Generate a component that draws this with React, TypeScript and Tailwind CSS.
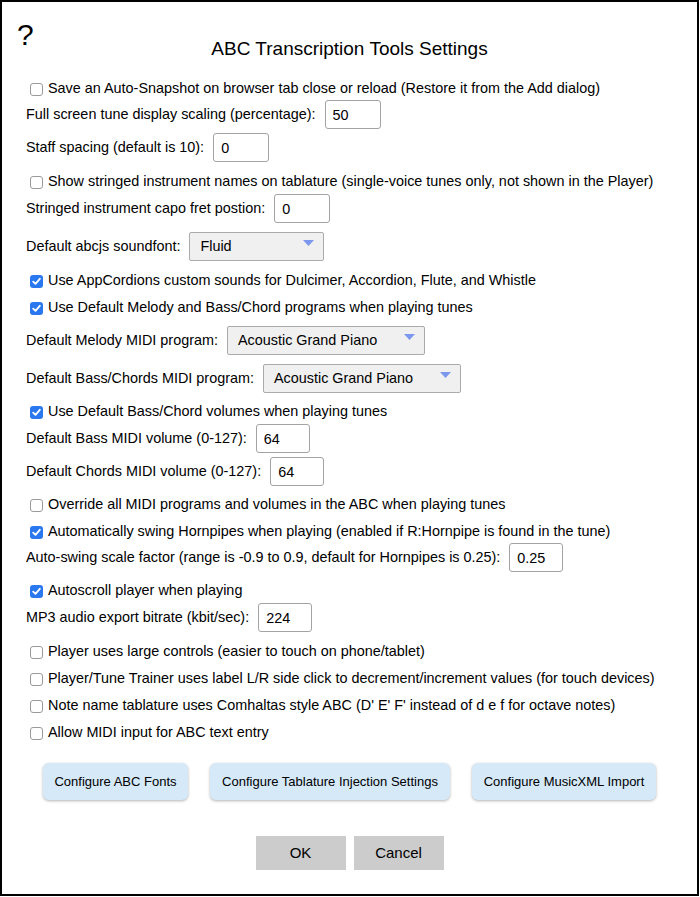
import React from "react"

type Row =
  | { kind: "check"; text: string; checked?: boolean; mt: string }
  | { kind: "input"; label: string; value: string; w: string; mt: string }
  | { kind: "select"; label: string; value: string; w: string; mt: string }

const rows: Row[] = [
  { kind: "check", text: "Save an Auto-Snapshot on browser tab close or reload (Restore it from the Add dialog)", mt: "mt-[22px]" },
  { kind: "input", label: "Full screen tune display scaling (percentage):", value: "50", w: "w-[56px]", mt: "mt-[2px]" },
  { kind: "input", label: "Staff spacing (default is 10):", value: "0", w: "w-[56px]", mt: "mt-[4px]" },
  { kind: "check", text: "Show stringed instrument names on tablature (single-voice tunes only, not shown in the Player)", mt: "mt-[11px]" },
  { kind: "input", label: "Stringed instrument capo fret postion:", value: "0", w: "w-[56px]", mt: "mt-[3px]" },
  { kind: "select", label: "Default abcjs soundfont:", value: "Fluid", w: "w-[135px]", mt: "mt-[9px]" },
  { kind: "check", text: "Use AppCordions custom sounds for Dulcimer, Accordion, Flute, and Whistle", checked: true, mt: "mt-[11px]" },
  { kind: "check", text: "Use Default Melody and Bass/Chord programs when playing tunes", checked: true, mt: "mt-[9px]" },
  { kind: "select", label: "Default Melody MIDI program:", value: "Acoustic Grand Piano", w: "w-[198px]", mt: "mt-[9px]" },
  { kind: "select", label: "Default Bass/Chords MIDI program:", value: "Acoustic Grand Piano", w: "w-[198px]", mt: "mt-[9px]" },
  { kind: "check", text: "Use Default Bass/Chord volumes when playing tunes", checked: true, mt: "mt-[10px]" },
  { kind: "input", label: "Default Bass MIDI volume (0-127):", value: "64", w: "w-[54px]", mt: "mt-[3px]" },
  { kind: "input", label: "Default Chords MIDI volume (0-127):", value: "64", w: "w-[54px]", mt: "mt-[4px]" },
  { kind: "check", text: "Override all MIDI programs and volumes in the ABC when playing tunes", mt: "mt-[10px]" },
  { kind: "check", text: "Automatically swing Hornpipes when playing (enabled if R:Hornpipe is found in the tune)", checked: true, mt: "mt-[9px]" },
  { kind: "input", label: "Auto-swing scale factor (range is -0.9 to 0.9, default for Hornpipes is 0.25):", value: "0.25", w: "w-[54px]", mt: "mt-[2px]" },
  { kind: "check", text: "Autoscroll player when playing", checked: true, mt: "mt-[10px]" },
  { kind: "input", label: "MP3 audio export bitrate (kbit/sec):", value: "224", w: "w-[54px]", mt: "mt-[3px]" },
  { kind: "check", text: "Player uses large controls (easier to touch on phone/tablet)", mt: "mt-[11px]" },
  { kind: "check", text: "Player/Tune Trainer uses label L/R side click to decrement/increment values (for touch devices)", mt: "mt-[9px]" },
  { kind: "check", text: "Note name tablature uses Comhaltas style ABC (D' E' F' instead of d e f for octave notes)", mt: "mt-[9px]" },
  { kind: "check", text: "Allow MIDI input for ABC text entry", mt: "mt-[9px]" },
]

function Box({ checked }: { checked?: boolean }) {
  if (checked) {
    return (
      <span className="ml-[4px] mr-[5px] flex h-[13px] w-[13px] shrink-0 items-center justify-center rounded-[3px] bg-[#2a78f0]">
        <svg width="9" height="9" viewBox="0 0 9 9">
          <path d="M1.2 4.6 L3.5 6.9 L7.8 1.8" fill="none" stroke="white" strokeWidth="1.8" strokeLinecap="round" strokeLinejoin="round" />
        </svg>
      </span>
    )
  }
  return <span className="ml-[4px] mr-[5px] h-[13px] w-[13px] shrink-0 rounded-[3px] border border-[#9a9a9a] bg-white" />
}

function SettingRow({ row }: { row: Row }) {
  if (row.kind === "check") {
    return (
      <label className={`flex h-[18px] items-center whitespace-nowrap ${row.mt}`}>
        <Box checked={row.checked} />
        <span>{row.text}</span>
      </label>
    )
  }
  if (row.kind === "input") {
    return (
      <div className={`flex h-[29px] items-center gap-[9px] whitespace-nowrap ${row.mt}`}>
        <span>{row.label}</span>
        <input
          readOnly
          value={row.value}
          className={`h-[29px] ${row.w} rounded-[3px] border border-[#a3a3a3] bg-white pl-[7px] text-[14.4px] outline-none`}
        />
      </div>
    )
  }
  return (
    <div className={`flex h-[29px] items-center gap-[9px] whitespace-nowrap ${row.mt}`}>
      <span>{row.label}</span>
      <div className={`flex h-[29px] ${row.w} items-start justify-between rounded-[2px] border border-[#ababab] bg-[#f0f0f0] pl-[10px] pr-[9px]`}>
        <span className="self-center">{row.value}</span>
        <svg className="mt-[7px]" width="11" height="6" viewBox="0 0 11 6">
          <polygon points="0,0 11,0 5.5,6" fill="#7c98ee" />
        </svg>
      </div>
    </div>
  )
}

export default function App() {
  return (
    <div className="h-[896px] w-[699px] border-2 border-black bg-white font-['Liberation_Sans',Arial,sans-serif] text-[14.4px] text-black">
      <div className="grid grid-cols-[1fr_auto_1fr] items-start">
        <div className="pl-[15px] pt-[18px] text-[30px] leading-none">?</div>
        <h1 className="mt-[37px] text-[19px] leading-none font-normal">ABC Transcription Tools Settings</h1>
        <div />
      </div>

      <div className="flex flex-col pl-[24px]">
        {rows.map((row, i) => (
          <SettingRow key={i} row={row} />
        ))}
      </div>

      <div className="mt-[21px] flex justify-center gap-[22px] text-[13px]">
        <button className="h-[37px] w-[145px] rounded-[6px] bg-[#d5e9f9] shadow-[0_1px_3px_rgba(0,0,0,0.3)]">Configure ABC Fonts</button>
        <button className="h-[37px] w-[240px] rounded-[6px] bg-[#d5e9f9] shadow-[0_1px_3px_rgba(0,0,0,0.3)]">Configure Tablature Injection Settings</button>
        <button className="h-[37px] w-[184px] rounded-[6px] bg-[#d5e9f9] shadow-[0_1px_3px_rgba(0,0,0,0.3)]">Configure MusicXML Import</button>
      </div>

      <div className="mt-[36px] flex justify-center gap-[8px] text-[15px]">
        <button className="h-[34px] w-[90px] bg-[#cccccc]">OK</button>
        <button className="h-[34px] w-[90px] bg-[#cccccc]">Cancel</button>
      </div>
    </div>
  )
}
